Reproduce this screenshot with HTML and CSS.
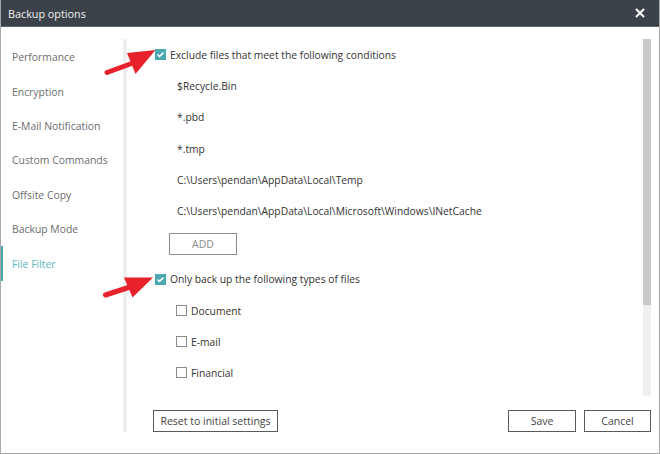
FILE: index.html
```html
<!DOCTYPE html>
<html>
<head>
<meta charset="utf-8">
<link rel="stylesheet" href="styles.css">
</head>
<body>
<div class="window">
  <div class="titlebar">
    <span class="title">Backup options</span>
    <svg class="close" width="10" height="10" viewBox="0 0 10 10"><path d="M1 1 L9 9 M9 1 L1 9" stroke="#fff" stroke-width="2"/></svg>
  </div>
  <div class="main">
    <nav class="sidebar">
      <div class="nav-item">Performance</div>
      <div class="nav-item">Encryption</div>
      <div class="nav-item">E-Mail Notification</div>
      <div class="nav-item">Custom Commands</div>
      <div class="nav-item">Offsite Copy</div>
      <div class="nav-item">Backup Mode</div>
      <div class="nav-item active">File Filter</div>
    </nav>
    <div class="divider"></div>
    <section class="content">
      <div class="scroll">
        <div class="list">
          <div class="row head"><span class="cb checked"><svg width="11" height="11" viewBox="0 0 11 11"><path d="M2.6 5.6 L4.6 7.4 L8.4 3.6" fill="none" stroke="#fff" stroke-width="1.6"/></svg></span><span>Exclude files that meet the following conditions</span></div>
          <div class="row item">$Recycle.Bin</div>
          <div class="row item">*.pbd</div>
          <div class="row item">*.tmp</div>
          <div class="row item">C:\Users\pendan\AppData\Local\Temp</div>
          <div class="row item">C:\Users\pendan\AppData\Local\Microsoft\Windows\INetCache</div>
          <button class="add">ADD</button>
          <div class="row head second"><span class="cb checked"><svg width="11" height="11" viewBox="0 0 11 11"><path d="M2.6 5.6 L4.6 7.4 L8.4 3.6" fill="none" stroke="#fff" stroke-width="1.6"/></svg></span><span>Only back up the following types of files</span></div>
          <div class="row sub"><span class="cb"></span><span>Document</span></div>
          <div class="row sub"><span class="cb"></span><span>E-mail</span></div>
          <div class="row sub"><span class="cb"></span><span>Financial</span></div>
        </div>
        <div class="scrollbar"><div class="thumb"></div></div>
      </div>
      <div class="footer">
        <button class="btn reset">Reset to initial settings</button>
        <div class="spacer"></div>
        <button class="btn save">Save</button>
        <button class="btn cancel">Cancel</button>
      </div>
    </section>
  </div>
  <svg class="arrows" width="660" height="454" viewBox="0 0 660 454">
    <line x1="106" y1="72.5" x2="132" y2="63" stroke="#e8222a" stroke-width="5" stroke-linecap="round"/>
    <polygon points="154.5,50 126,53 134.5,74" fill="#e8222a"/>
    <line x1="104.5" y1="295" x2="129" y2="287" stroke="#e8222a" stroke-width="5" stroke-linecap="round"/>
    <polygon points="152,277.5 123,277.5 131.5,297.5" fill="#e8222a"/>
  </svg>
</div>
</body>
</html>
```
FILE: styles.css
```css
html, body {
  margin: 0;
  padding: 0;
  background: #fff;
}
body {
  font-family: "Open Sans", "Noto Sans", sans-serif;
  font-size: 10.3px;
}
.window {
  position: relative;
  width: 660px;
  height: 454px;
  box-sizing: border-box;
  border: 1px solid #a8a8a8;
  border-top: none;
  display: flex;
  flex-direction: column;
  overflow: hidden;
}
.titlebar {
  height: 27px;
  margin: 0 -1px;
  background: #3b4249;
  border-bottom: 1px solid #5a6068;
  box-sizing: border-box;
  display: flex;
  align-items: center;
  padding: 0 15px 0 8px;
  color: #f2f2f2;
  flex-shrink: 0;
}
.title {
  font-size: 10.8px;
  flex: 1;
}
.close {
  display: block;
}
.main {
  flex: 1;
  display: flex;
  padding-top: 13px;
  padding-bottom: 21px;
}
.sidebar {
  width: 122px;
  display: flex;
  flex-direction: column;
}
.nav-item {
  height: 34.4px;
  display: flex;
  align-items: center;
  padding-left: 9px;
  color: #6d6d6d;
  font-size: 10.4px;
  box-sizing: border-box;
  border-left: 2px solid transparent;
}
.nav-item.active {
  color: #5ab6be;
  border-left-color: #4aa9b1;
}
.divider {
  width: 4px;
  background: #efefef;
  margin-top: -1px;
}
.content {
  flex: 1;
  display: flex;
  flex-direction: column;
}
.scroll {
  height: 357px;
  display: flex;
  margin-top: -1px;
}
.list {
  flex: 1;
  display: flex;
  flex-direction: column;
  align-items: flex-start;
  padding-left: 28px;
  color: #333;
  font-size: 10.3px;
}
.row {
  height: 31.3px;
  display: flex;
  align-items: center;
  flex-shrink: 0;
}
.item {
  padding-left: 22px;
}
.head .cb {
  margin-right: 4px;
}
.head.second {
  margin-top: 8.8px;
}
.sub {
  height: 31px;
  padding-left: 21px;
}
.sub .cb {
  margin-right: 4px;
}
.cb {
  width: 11px;
  height: 11px;
  box-sizing: border-box;
  border: 1px solid #8a8a8a;
  background: #fff;
  display: inline-block;
  flex-shrink: 0;
}
.cb.checked {
  border: none;
  background: #4aa8b1;
}
.cb svg {
  display: block;
}
.add {
  margin-top: 6.2px;
  margin-left: 14px;
  width: 68px;
  height: 22px;
  border: 1px solid #8c8c8c;
  background: #fff;
  color: #8a8a8a;
  font-family: inherit;
  font-size: 10.5px;
  padding: 0;
}
.scrollbar {
  width: 8px;
  margin-right: 8px;
  background: #f0f0f0;
}
.thumb {
  height: 266px;
  background: #c9c9c9;
}
.footer {
  display: flex;
  align-items: flex-end;
  flex: 1;
  padding-left: 26px;
  padding-right: 8px;
}
.spacer {
  flex: 1;
}
.btn {
  height: 22px;
  border: 1px solid #5a5a5a;
  background: #fff;
  color: #444;
  font-family: inherit;
  font-size: 10.5px;
  padding: 0;
}
.reset {
  width: 125px;
}
.save {
  width: 68px;
  margin-right: 8px;
}
.cancel {
  width: 67px;
}
.arrows {
  position: absolute;
  left: 0;
  top: 0;
  pointer-events: none;
}
```
